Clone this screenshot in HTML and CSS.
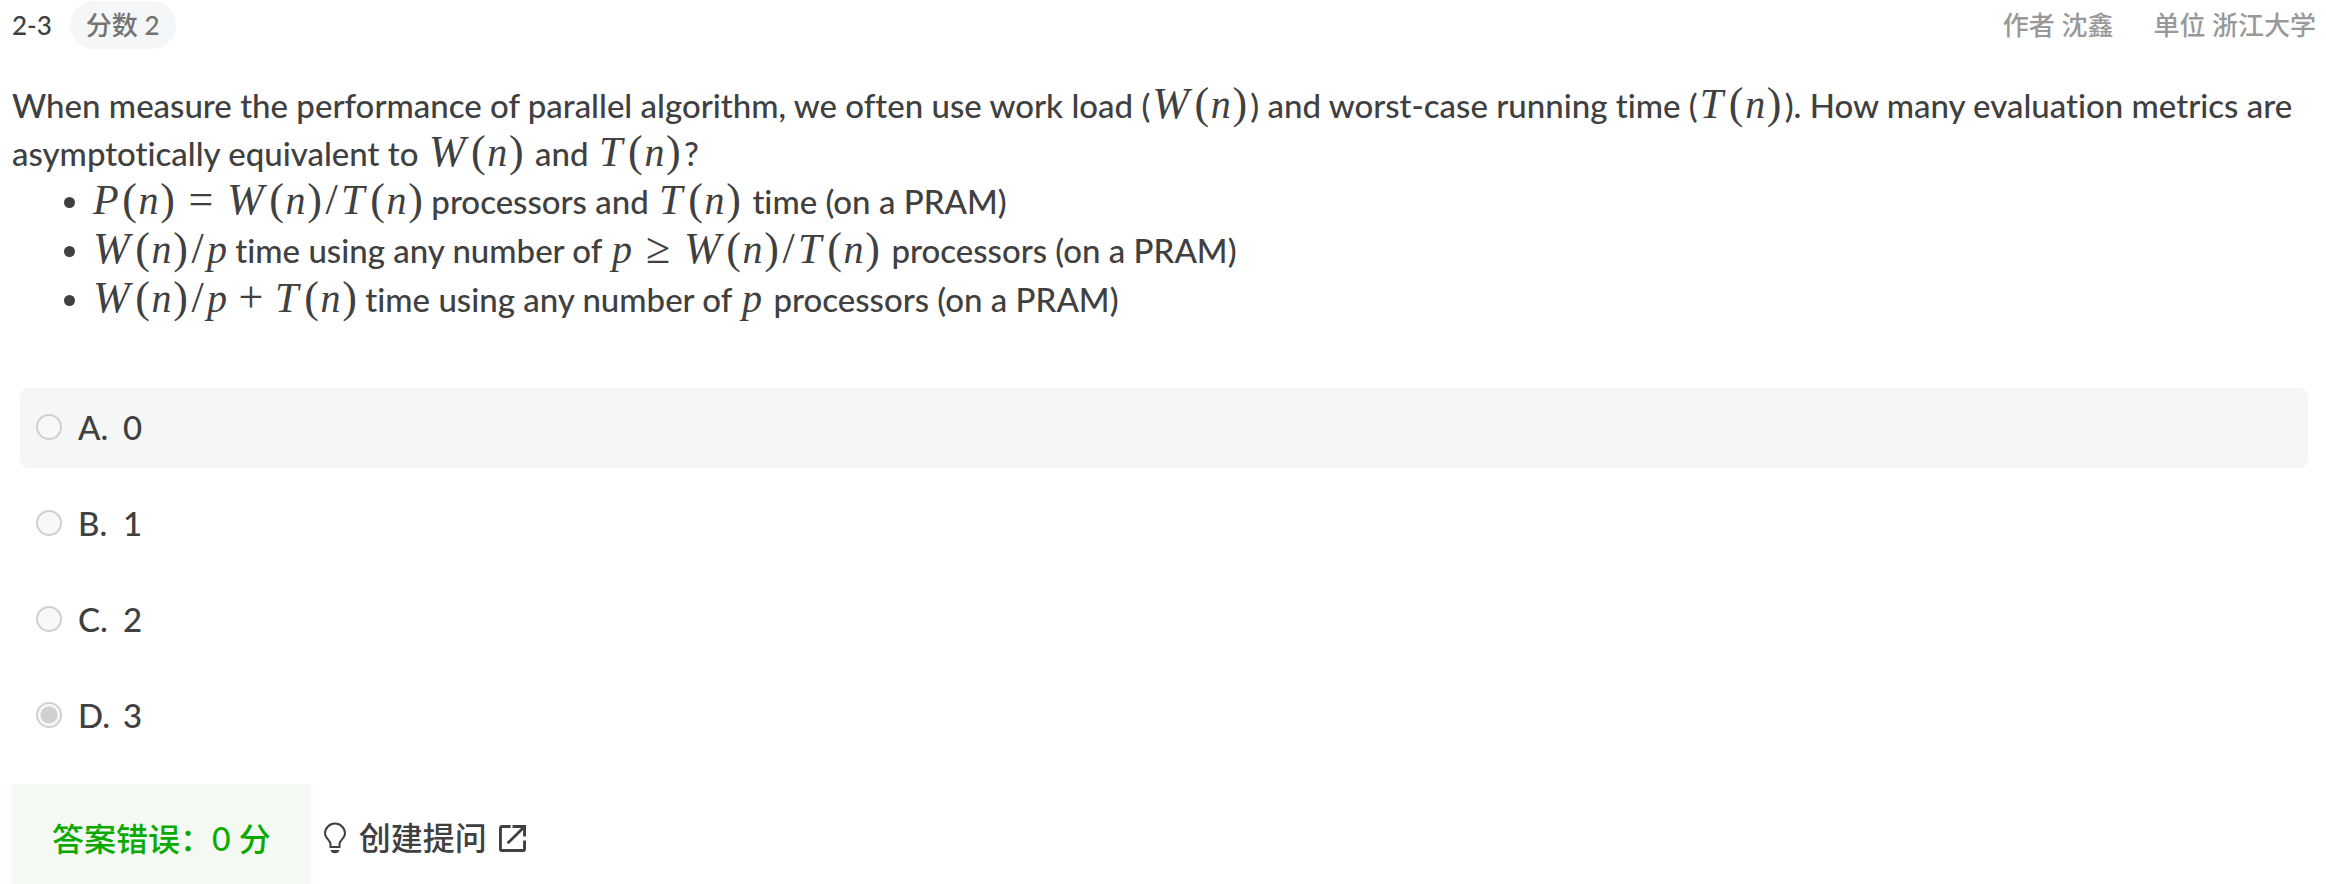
FILE: index.html
```html
<!DOCTYPE html>
<html lang="zh-CN">
<head>
<meta charset="utf-8">
<meta name="viewport" content="width=device-width, initial-scale=1">
<title>2-3</title>
<link rel="stylesheet" href="styles.css">
</head>
<body>
<main class="problem">
  <header class="head">
    <span class="number">2-3</span>
    <span class="score">分数 2</span>
    <div class="meta"><span>作者 沈鑫</span><span>单位 浙江大学</span></div>
  </header>

  <section class="statement">
    <p class="text">When measure the performance of parallel algorithm, we often use work load (<span class="math"><i class="w">W</i><b>(</b><i class="n">n</i><b>)</b></span>) and worst-case running time (<span class="math"><i class="t">T</i><b>(</b><i class="n">n</i><b>)</b></span>). How many evaluation metrics are asymptotically equivalent to <span class="math"><i class="w">W</i><b>(</b><i class="n">n</i><b>)</b></span> and <span class="math"><i class="t">T</i><b>(</b><i class="n">n</i><b>)</b></span>?</p>
    <ul class="metrics">
      <li><span class="math"><i class="t">P</i><b>(</b><i class="n">n</i><b>)</b><b class="rel">=</b><i class="w">W</i><b>(</b><i class="n">n</i><b>)</b><b class="slash">/</b><i class="t">T</i><b>(</b><i class="n">n</i><b>)</b></span> processors and <span class="math"><i class="t">T</i><b>(</b><i class="n">n</i><b>)</b></span> time (on a PRAM)</li>
      <li><span class="math"><i class="w">W</i><b>(</b><i class="n">n</i><b>)</b><b class="slash">/</b><i class="p">p</i></span> time using any number of <span class="math"><i class="p">p</i><b class="rel">≥</b><i class="w">W</i><b>(</b><i class="n">n</i><b>)</b><b class="slash">/</b><i class="t">T</i><b>(</b><i class="n">n</i><b>)</b></span> processors (on a PRAM)</li>
      <li><span class="math"><i class="w">W</i><b>(</b><i class="n">n</i><b>)</b><b class="slash">/</b><i class="p">p</i><b class="bin">+</b><i class="t">T</i><b>(</b><i class="n">n</i><b>)</b></span> time using any number of <span class="math"><i class="p">p</i></span> processors (on a PRAM)</li>
    </ul>
  </section>

  <form class="options">
    <label class="option shaded"><input type="radio" name="answer" disabled><span class="letter">A.</span><span>0</span></label>
    <label class="option"><input type="radio" name="answer" disabled><span class="letter">B.</span><span>1</span></label>
    <label class="option"><input type="radio" name="answer" disabled><span class="letter">C.</span><span>2</span></label>
    <label class="option"><input type="radio" name="answer" disabled checked><span class="letter">D.</span><span>3</span></label>
  </form>

  <footer class="foot">
    <div class="result">答案错误：0 分</div>
    <a class="ask" href="#">
      <svg class="bulb" viewBox="0 0 24 32" fill="none" stroke="currentColor" stroke-width="2"><path d="M7.500 25V22C7.500 18.500 2 16 2 11.500A10 10 0 0 1 22 11.500C22 16 16.500 18.500 16.500 22V25Z"/><path d="M7.500 28H16.500C16.200 30 14.500 31.300 12 31.300S7.800 30 7.500 28Z" fill="currentColor" stroke="none"/></svg>
      <span>创建提问</span>
      <svg class="ext" viewBox="0 0 28 28" fill="none" stroke="currentColor" stroke-width="3"><path d="M12 1.500H3.500Q1.500 1.500 1.500 3.500V24.500Q1.500 26.500 3.500 26.500H24.500Q26.500 26.500 26.500 24.500V16M14 1.500H26.500V12M26 2L9 19"/></svg>
    </a>
  </footer>
</main>
</body>
</html>
```
FILE: styles.css
```css
* { box-sizing: border-box; }
body {
  margin: 0;
  background: #fff;
  color: #404040;
  font-family: Lato, "Noto Sans CJK SC", sans-serif;
  font-size: 33px;
  font-weight: 500;
  font-variant-ligatures: none;
  line-height: 48px;
  overflow: hidden;
}
.problem { padding: 1px 10px 0 12px; }
.head {
  display: flex;
  align-items: center;
  gap: 18px;
  height: 48px;
  font-size: 26px;
}
.score {
  padding: 0 16px;
  border-radius: 24px;
  background: #f5f6f8;
  color: #737373;
}
.meta {
  display: flex;
  gap: 40px;
  margin-left: auto;
  color: #999;
}
.statement { margin-top: 32px; }
.text { margin: 0; }
.metrics { margin: 0; padding-left: 81px; line-height: 49px; }
.math {
  margin: 0 3px 0 2px;
  font-family: "Liberation Serif", serif;
  font-size: 40px;
  line-height: 40px;
  white-space: nowrap;
}
.metrics .math:first-child { margin: 0; }
.math i, .math b {
  display: inline-block;
  font-weight: 400;
}
.math b { width: 15px; font-size: 44px; text-align: center; }
.math .w { width: 42px; font-size: 44px; }
.math .t { width: 29px; font-size: 42px; }
.math .n { width: 23px; text-align: center; }
.math .p { width: 20px; }
.math .slash { width: 19px; }
.math .rel { width: 52px; }
.math .bin { width: 48px; }
.options {
  display: flex;
  flex-direction: column;
  gap: 16px;
  margin: 64px 8px 0;
}
.option {
  display: flex;
  align-items: center;
  height: 80px;
  padding: 0 16px 3px;
  border-radius: 8px;
}
.shaded { background: #f5f6f8; }
.option input {
  appearance: none;
  width: 26px;
  height: 26px;
  margin: 0 16px 0 0;
  border: 2px solid #d0d0d0;
  border-radius: 50%;
  background: #f8f8f8;
}
.option input:checked {
  background: radial-gradient(circle, #d0d0d0 0 8px, #f8f8f8 9px);
}
.letter { width: 45px; }
.foot {
  display: flex;
  align-items: center;
  gap: 12px;
  margin-top: 28px;
  font-size: 32px;
}
.result {
  padding: 31px 40px 29px;
  background: #f4faf3;
  color: #0aaa00;
}
.ask {
  display: flex;
  align-items: center;
  gap: 12px;
  color: inherit;
  text-decoration: none;
}
.bulb { width: 24px; height: 32px; }
.ext { width: 27px; height: 27px; }
```
